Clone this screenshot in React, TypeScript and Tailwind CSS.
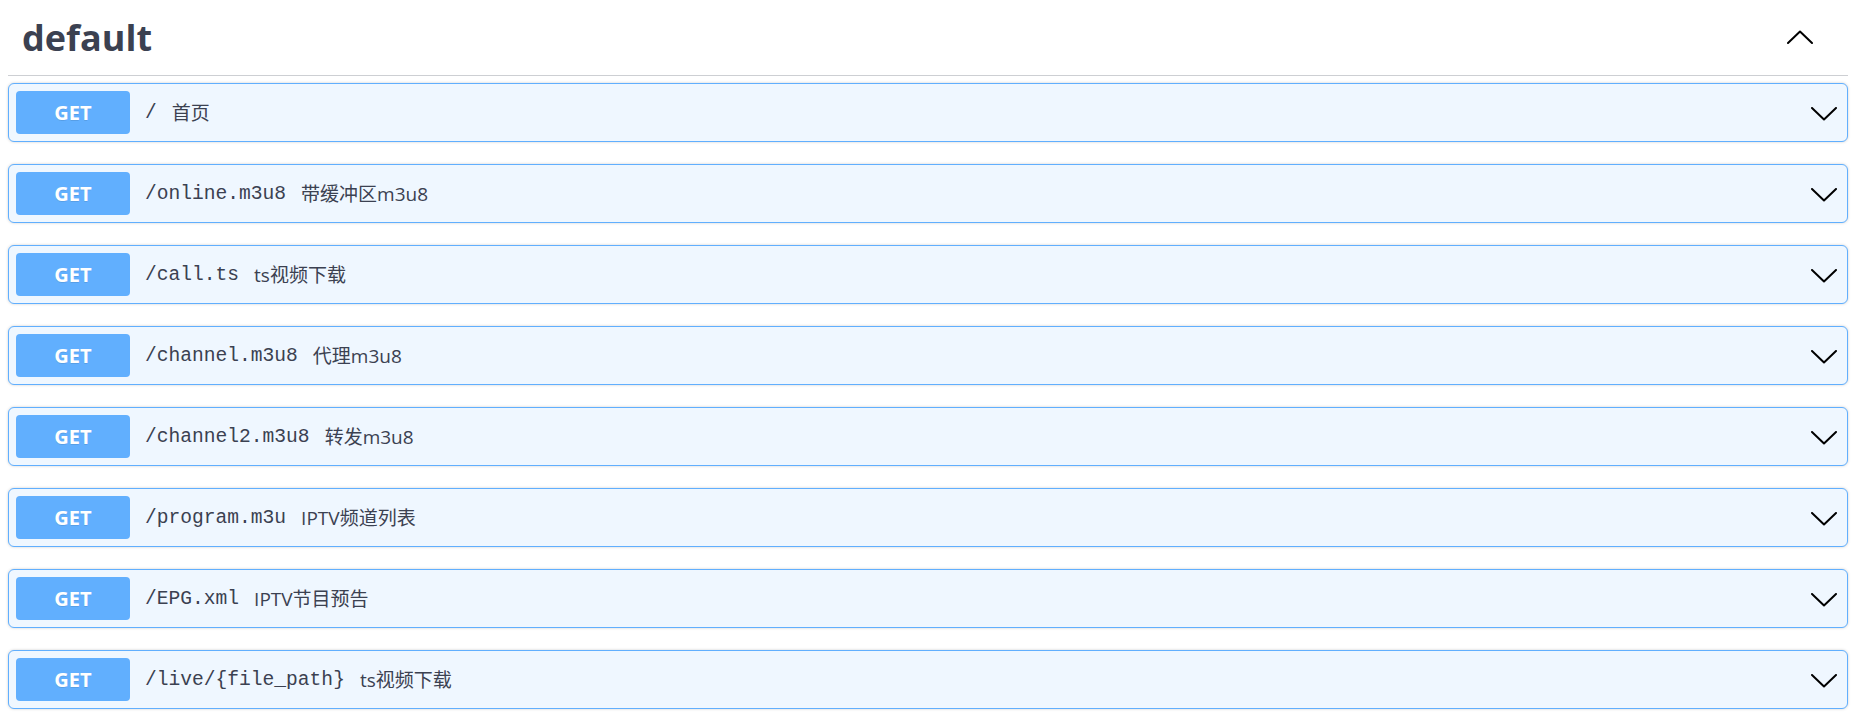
import React from 'react';

interface Op {
  path: string;
  summary: string;
}

const ops: Op[] = [
  { path: '/', summary: '首页' },
  { path: '/online.m3u8', summary: '带缓冲区m3u8' },
  { path: '/call.ts', summary: 'ts视频下载' },
  { path: '/channel.m3u8', summary: '代理m3u8' },
  { path: '/channel2.m3u8', summary: '转发m3u8' },
  { path: '/program.m3u', summary: 'IPTV频道列表' },
  { path: '/EPG.xml', summary: 'IPTV节目预告' },
  { path: '/live/{file_path}', summary: 'ts视频下载' },
];

const Chevron: React.FC<{ up?: boolean }> = ({ up }) => (
  <svg width="26" height="14" viewBox="0 0 26 14" fill="none">
    <path
      d={up ? 'M1 13 L13 1.5 L25 13' : 'M1 1 L13 12.5 L25 1'}
      stroke="#000"
      strokeWidth="2"
      strokeLinecap="round"
      strokeLinejoin="round"
    />
  </svg>
);

const OpRow: React.FC<{ op: Op }> = ({ op }) => (
  <div className="mb-[22px] h-[59px] flex items-center rounded-[6px] border border-[#61affe] bg-[#eff7ff] shadow-[0_0_3px_rgba(0,0,0,0.19)] pl-[7px] pr-[10px]">
    <div className="w-[114px] h-[43px] shrink-0 rounded-[4px] bg-[#61affe] flex items-center justify-center text-white font-bold text-[20px] [text-shadow:0_1px_0_rgba(0,0,0,0.1)] font-['Open_Sans',sans-serif]">
      GET
    </div>
    <span className="pl-[15px] pr-[15px] pt-[3px] text-[19.6px] text-[#3b4151] font-['Liberation_Mono',monospace] whitespace-nowrap">
      {op.path}
    </span>
    <span className="pt-[2px] text-[19px] text-[#3b4151] font-['Open_Sans','Noto_Sans_CJK_SC',sans-serif]">
      {op.summary}
    </span>
    <div className="ml-auto flex items-center mt-[2px]">
      <Chevron />
    </div>
  </div>
);

export default function App() {
  return (
    <div className="bg-white min-h-screen pl-2 pr-[9px]">
      <div className="h-[76px] flex items-center border-b border-[#cdcfd3] pl-[14px] pr-[35px]">
        <h3 className="text-[36px] font-bold text-[#3b4151] font-['Open_Sans',sans-serif] leading-none">
          default
        </h3>
        <div className="ml-auto -mt-[2px]">
          <Chevron up />
        </div>
      </div>
      <div className="pt-[7px]">
        {ops.map((op) => (
          <OpRow key={op.path} op={op} />
        ))}
      </div>
    </div>
  );
}
